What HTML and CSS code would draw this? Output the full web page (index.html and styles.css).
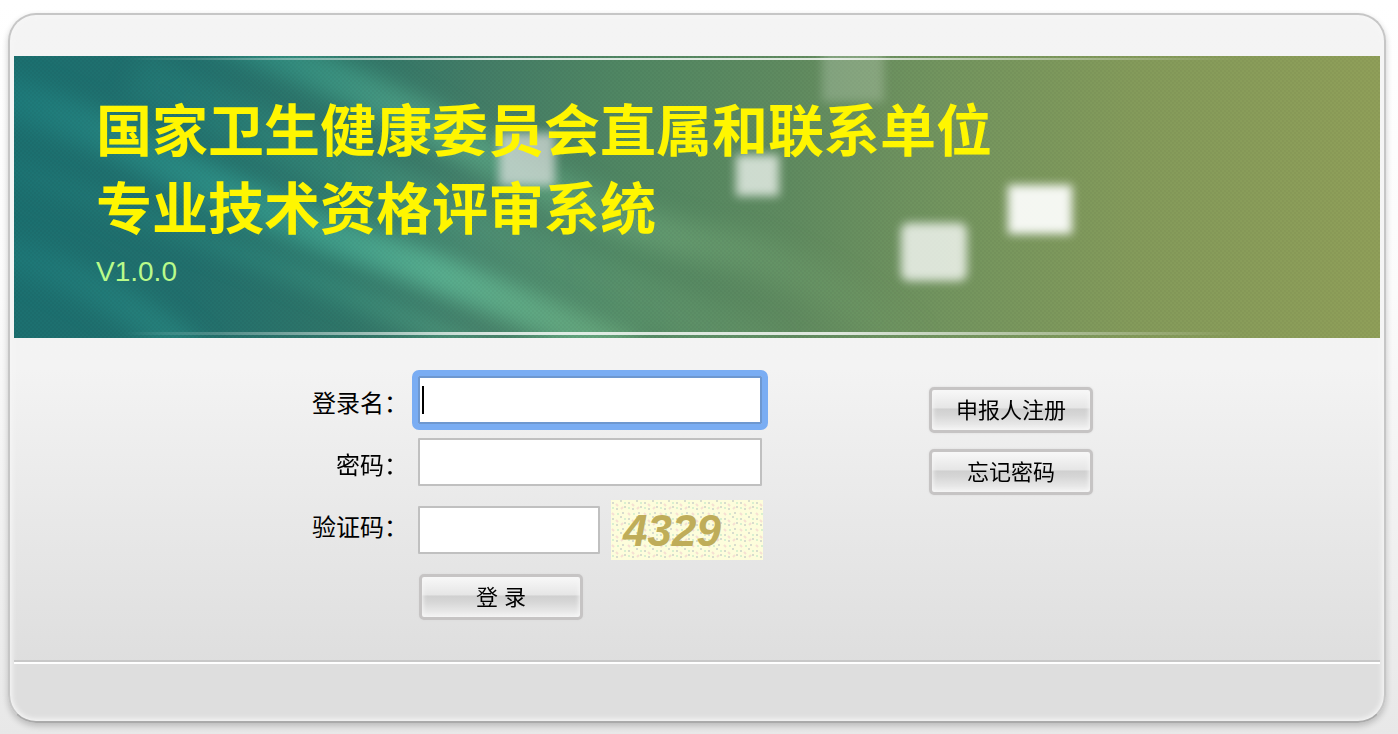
FILE: index.html
```html
<!DOCTYPE html>
<html lang="zh-CN">
<head>
  <meta charset="UTF-8" />
  <meta name="viewport" content="width=device-width, initial-scale=1.0" />
  <title>专业技术资格评审系统</title>
  <link rel="stylesheet" href="styles.css">
</head>
<body>
  <div class="panel">
    <div class="banner">
      <svg class="banner-bg" viewBox="0 0 1366 282" preserveAspectRatio="none" aria-hidden="true">
        <defs>
          <linearGradient id="base" x1="0" y1="0" x2="1" y2="0">
            <stop offset="0" stop-color="#1c7070" />
            <stop offset="0.13" stop-color="#22706d" />
            <stop offset="0.24" stop-color="#2f7669" />
            <stop offset="0.34" stop-color="#437d67" />
            <stop offset="0.45" stop-color="#518763" />
            <stop offset="0.57" stop-color="#608b60" />
            <stop offset="0.68" stop-color="#73955f" />
            <stop offset="0.82" stop-color="#849b5b" />
            <stop offset="1" stop-color="#8f9f59" />
          </linearGradient>
          <linearGradient id="shine" x1="0" y1="0" x2="1" y2="0">
            <stop offset="0.08" stop-color="#fff" stop-opacity="0" />
            <stop offset="0.35" stop-color="#fff" stop-opacity="0.8" />
            <stop offset="0.6" stop-color="#fff" stop-opacity="0.8" />
            <stop offset="0.9" stop-color="#fff" stop-opacity="0" />
          </linearGradient>
          <linearGradient id="ray" gradientUnits="userSpaceOnUse" x1="0" y1="0" x2="950" y2="0">
            <stop offset="0" stop-color="#218585" stop-opacity="0.5" />
            <stop offset="0.25" stop-color="#34a093" stop-opacity="0.7" />
            <stop offset="0.45" stop-color="#61bd9a" stop-opacity="0.8" />
            <stop offset="0.7" stop-color="#77b17f" stop-opacity="0.6" />
            <stop offset="1" stop-color="#77a768" stop-opacity="0" />
          </linearGradient>
          <pattern id="mesh" width="4" height="4" patternUnits="userSpaceOnUse">
            <path d="M0 0h2v2h-2zM2 2h2v2h-2z" fill="#000" fill-opacity="0.03" />
          </pattern>
          <filter id="soft" filterUnits="userSpaceOnUse" x="-60" y="-60" width="1100" height="420" color-interpolation-filters="sRGB"><feGaussianBlur stdDeviation="11" /></filter>
          <filter id="blur" x="-30%" y="-30%" width="160%" height="160%" color-interpolation-filters="sRGB"><feGaussianBlur stdDeviation="5" /></filter>
        </defs>
        <rect width="1366" height="282" fill="url(#base)" />
        <g fill="none" stroke="url(#ray)" filter="url(#soft)">
          <path d="M190 -30Q340 25 474 100T700 190T900 290" stroke-width="38" opacity="0.7" />
          <path d="M120 20Q300 100 450 165T760 300" stroke-width="50" opacity="0.35" />
          <path d="M-40 30Q60 60 152 107T360 194T620 300" stroke-width="40" />
          <path d="M-40 100Q130 160 250 205T480 300" stroke-width="20" opacity="0.5" />
          <path d="M-40 190Q80 215 180 300" stroke-width="34" opacity="0.7" />
        </g>
        <rect width="1366" height="282" fill="url(#mesh)" />
        <g fill="#fff">
          <rect x="808" y="-10" width="62" height="56" fill-opacity="0.2" filter="url(#blur)" />
          <rect x="485" y="77" width="56" height="53" fill="#e4e4e4" fill-opacity="0.68" filter="url(#blur)" />
          <rect x="722" y="99" width="43" height="41" fill-opacity="0.7" filter="url(#blur)" />
          <rect x="887" y="167" width="66" height="58" rx="8" fill-opacity="0.76" filter="url(#blur)" />
          <rect x="994" y="129" width="64" height="49" fill-opacity="0.92" filter="url(#blur)" />
        </g>
        <rect y="2" width="1366" height="2" fill="url(#shine)" />
        <rect y="276" width="1366" height="3" fill="url(#shine)" />
      </svg>
      <div class="banner-text">
        <h1>国家卫生健康委员会直属和联系单位<br>专业技术资格评审系统</h1>
        <p class="version">V1.0.0</p>
      </div>
    </div>

    <form class="login">
      <div class="fields">
        <label for="username">登录名：</label>
        <input type="text" id="username" autofocus />

        <label for="password">密码：</label>
        <input type="password" id="password" />

        <label for="captcha">验证码：</label>
        <div class="captcha-row">
          <input type="text" id="captcha" class="short" />
          <svg class="captcha" width="152" height="60" viewBox="0 0 152 60">
            <defs>
              <pattern id="dots" width="16" height="16" patternUnits="userSpaceOnUse">
                <rect width="16" height="16" fill="#fdfddb" />
                <path d="M1 3h2M9 1h2M13 7h2M5 9h2M11 13h2" stroke="#d8dccd" stroke-width="2" />
                <path d="M5 4l2 2M1 13l2 2M10 9l2 -2" stroke="#f6dfd2" stroke-width="2" />
                <path d="M13 3h2M1 8h2M6 14h2" stroke="#d9f0cf" stroke-width="2" />
              </pattern>
            </defs>
            <rect width="152" height="60" fill="url(#dots)" />
            <text x="12" y="46" class="captcha-text">4329</text>
          </svg>
        </div>

        <button type="submit" class="btn submit">登 录</button>
      </div>

      <div class="side">
        <button type="button" class="btn">申报人注册</button>
        <button type="button" class="btn">忘记密码</button>
      </div>
    </form>

    <div class="footer"></div>
  </div>
</body>
</html>
```
FILE: styles.css
```css
html {
  min-height: 100%;
  background: linear-gradient(#ffffff, #fbfbfb 40%, #e8e8e8);
}
body {
  margin: 0;
  padding: 13px 12px 11px 8px;
  font-family: "Liberation Sans", "Noto Sans CJK SC", sans-serif;
  color: #000;
}
.panel {
  padding: 41px 4px 0;
  border: 2px solid #c6c6c6;
  border-bottom-color: #aaa;
  border-radius: 28px;
  background: linear-gradient(#f4f4f4, #f3f3f3 50%, #dedede 92%, #dedede);
  box-shadow: 0 3px 6px rgba(0,0,0,0.2), inset 0 0 5px 2px #f6f6f6;
}
.banner {
  position: relative;
  min-height: 282px;
}
.banner-bg {
  position: absolute;
  width: 100%;
  height: 100%;
}
.banner-text {
  position: relative;
  padding: 37px 82px 0;
}
h1 {
  margin: 0;
  font-size: 56px;
  line-height: 78px;
  color: #fff600;
}
.version {
  margin: 7px 0 0;
  font-size: 28px;
  line-height: 32px;
  color: #b9fb8a;
}
.login {
  display: flex;
  gap: 164px;
  padding: 38px 0 40px;
}
.fields {
  display: grid;
  grid-template-columns: 394px auto;
  gap: 14px 10px;
  align-items: start;
}
label {
  padding-top: 10px;
  font-size: 24px;
  line-height: 36px;
  text-align: right;
}
input {
  width: 344px;
  height: 48px;
  padding: 0 2px;
  border: 2px solid #c0c0c0;
  border-radius: 1px;
  box-sizing: border-box;
  background-color: #fff;
  font-family: inherit;
  font-size: 24px;
}
input:focus {
  border-color: #6e98d0;
  outline: 6px solid #7aadf3;
}
/* thick caret in the login name field */
#username:focus {
  caret-color: transparent;
  background: linear-gradient(#000, #000) 2px center / 2px 28px no-repeat #fff;
}
.short {
  width: 182px;
}
.captcha-row {
  display: flex;
  align-items: center;
  gap: 11px;
  height: 60px;
}
.captcha-text {
  font-family: "Liberation Sans", sans-serif;
  font-size: 44px;
  font-weight: bold;
  font-style: italic;
  fill: #bfad59;
}
.btn {
  width: 164px;
  height: 46px;
  padding: 2px 0 0;
  border: 3px solid #c6c4c4;
  border-radius: 5px;
  background: linear-gradient(#f8f8f8, #e6e6e6 44%, #d0d0d0 48%, #d6d6d6 62%, #f2f2f2);
  box-shadow: inset 0 0 4px 1px #f6f6f6, 0 0 2px #d8d8d8;
  font-family: inherit;
  font-size: 22px;
  line-height: 32px;
  color: #000;
  cursor: pointer;
}
.submit {
  grid-column: 2;
  margin-left: 1px;
}
.side {
  display: flex;
  flex-direction: column;
  gap: 16px;
  padding: 11px 0 0 2px;
}
.footer {
  height: 59px;
  border-top: 2px solid #c8c8c8;
  box-shadow: inset 0 2px #fff;
}
```
